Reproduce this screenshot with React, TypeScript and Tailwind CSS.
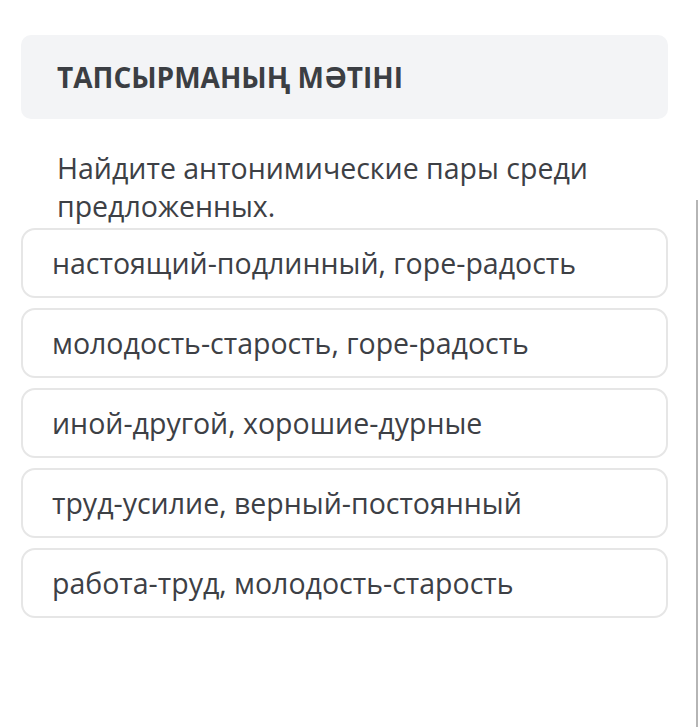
const options = [
  "настоящий-подлинный, горе-радость",
  "молодость-старость, горе-радость",
  "иной-другой, хорошие-дурные",
  "труд-усилие, верный-постоянный",
  "работа-труд, молодость-старость",
]

export default function App() {
  return (
    <div className="relative min-h-[727px] bg-white font-['Open_Sans',sans-serif] text-[#3d4045]">
      <div className="pl-[21px] pr-[30px] pt-[35px]">
        <div className="flex h-[84px] items-center rounded-[10px] bg-[#f3f4f6] px-[36px]">
          <h2 className="text-[28px] font-bold text-[#3b3e43]">ТАПСЫРМАНЫҢ МӘТІНІ</h2>
        </div>

        <p className="mt-[30px] px-[36px] text-[28.5px] leading-[38px]">
          Найдите антонимические пары среди предложенных.
        </p>

        <div className="mt-[3px] flex flex-col gap-[10px]">
          {options.map((opt) => (
            <div
              key={opt}
              className="flex h-[70px] items-center rounded-[14px] border-2 border-[#e6e6e6] px-[29px] text-[28.5px]"
            >
              {opt}
            </div>
          ))}
        </div>
      </div>

      {/* scroll edge */}
      <div className="absolute right-0 top-[200px] bottom-0 w-[2px] bg-[#b5b5b5]" />
    </div>
  )
}
